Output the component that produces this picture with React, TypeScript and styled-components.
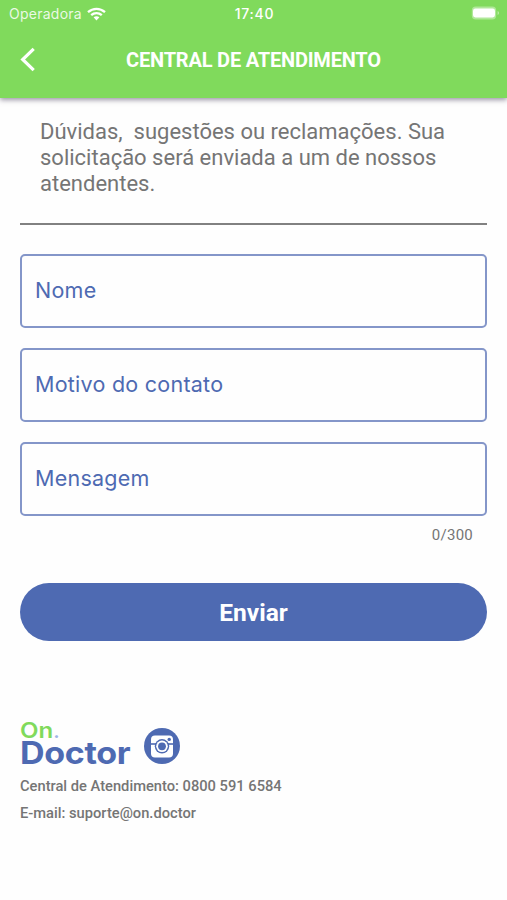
import React from "react";
import styled, { createGlobalStyle, ThemeProvider } from "styled-components";

const theme = {
  green: "#80da5c",
  blue: "#4e6ab2",
  border: "#8496c9",
  gray: "#757575",
  white: "#ffffff",
};

const GlobalStyle = createGlobalStyle`
  * {
    box-sizing: border-box;
  }

  body {
    margin: 0;
    background: #fefefe;
    font-family: Roboto, "Liberation Sans", sans-serif;
  }
`;

const StyledPage = styled.div`
  display: flex;
  flex-direction: column;
  min-height: 900px;
`;

const StyledHeader = styled.header`
  height: 98px;
  background: ${({ theme }) => theme.green};
  color: ${({ theme }) => theme.white};
  box-shadow: 0 2px 5px rgba(60, 50, 80, 0.5);
`;

const StyledStatusBar = styled.div`
  display: grid;
  grid-template-columns: 1fr auto 1fr;
  align-items: center;
  height: 27px;
  padding: 0 7px 0 9px;
  font-family: Inter, "Liberation Sans", sans-serif;
  font-size: 14px;
`;

const StyledCarrier = styled.div`
  display: flex;
  align-items: center;
  gap: 5px;
  letter-spacing: 0.25px;
  color: rgba(255, 255, 255, 0.85);
`;

const StyledClock = styled.div`
  font-weight: 500;
  letter-spacing: 0.7px;
`;

const StyledBattery = styled.svg`
  justify-self: end;
`;

const StyledToolbar = styled.div`
  display: grid;
  grid-template-columns: 40px 1fr 40px;
  align-items: center;
  height: 66px;
`;

const StyledBackButton = styled.button`
  display: flex;
  padding: 0 0 0 20px;
  border: 0;
  background: none;
  color: inherit;
`;

const StyledTitle = styled.h1`
  margin: 0;
  font-size: 20px;
  font-weight: 700;
  letter-spacing: -0.2px;
  text-align: center;
`;

const StyledContent = styled.main`
  display: flex;
  flex-direction: column;
  padding: 21px 20px 0;
`;

const StyledIntro = styled.p`
  margin: 0;
  padding: 0 20px 26px;
  border-bottom: 2px solid #818181;
  font-size: 22px;
  line-height: 26px;
  white-space: pre-line;
  color: ${({ theme }) => theme.gray};
`;

const StyledForm = styled.div`
  display: flex;
  flex-direction: column;
  gap: 20px;
  padding-top: 29px;
`;

const StyledField = styled.label`
  display: flex;
  align-items: center;
  height: 74px;
  padding: 0 13px 2px;
  border: 2px solid ${({ theme }) => theme.border};
  border-radius: 5px;
  font-family: Inter, "Liberation Sans", sans-serif;
  font-size: 21.5px;
  letter-spacing: 0.25px;
  color: ${({ theme }) => theme.blue};
`;

const StyledInput = styled.input`
  flex: 1;
  min-width: 0;
  border: 0;
  outline: 0;
  background: none;
  font: inherit;
  color: inherit;
`;

const StyledCounter = styled.div`
  padding: 10px 14px 0 0;
  font-size: 15px;
  line-height: 18px;
  letter-spacing: 0.25px;
  text-align: right;
  color: ${({ theme }) => theme.gray};
`;

const StyledSubmit = styled.button`
  height: 58px;
  margin-top: 39px;
  padding: 0;
  border: 0;
  border-radius: 29px;
  background: ${({ theme }) => theme.blue};
  font-family: inherit;
  font-size: 24.5px;
  font-weight: 700;
  color: ${({ theme }) => theme.white};
`;

const StyledFooter = styled.footer`
  padding-top: 81px;
  font-size: 14.7px;
  font-weight: 500;
  color: ${({ theme }) => theme.gray};
`;

const StyledBrand = styled.div`
  display: flex;
  align-items: flex-end;
  gap: 13px;
  height: 43px;
  margin-bottom: 8px;
`;

const StyledLogo = styled.div`
  display: flex;
  flex-direction: column;
  width: 111px;
  font-family: Inter, "Liberation Sans", sans-serif;
`;

const StyledLogoTop = styled.div`
  font-size: 21.5px;
  font-weight: 600;
  line-height: 18px;
  color: ${({ theme }) => theme.green};
  transform: scaleX(1.12);
  transform-origin: left;
`;

const StyledLogoDot = styled.span`
  font-size: 18px;
  color: #9fb4e8;
`;

const StyledLogoBottom = styled.div`
  font-size: 31.5px;
  font-weight: 700;
  line-height: 24px;
  letter-spacing: -0.3px;
  color: ${({ theme }) => theme.blue};
  transform: scaleX(1.08);
  transform-origin: left;
`;

const StyledContact = styled.p`
  margin: 0;
  line-height: 27px;
`;

const fields = ["Nome", "Motivo do contato", "Mensagem"];

const WifiIcon = () => (
  <svg width="19" height="14" viewBox="0 0 19 14" fill="none">
    <path
      d="M1 5.2C6 .7 13 .7 18 5.2M4.2 8.2c3-2.8 7.6-2.8 10.6 0"
      stroke="#fff"
      strokeWidth="2.3"
    />
    <path d="M6.6 10.3c1.7-1.4 4.1-1.4 5.8 0L9.5 13.4z" fill="#fff" />
  </svg>
);

const BatteryIcon = () => (
  <StyledBattery width="29" height="15" viewBox="0 0 29 15">
    <rect x="0.8" y="0.6" width="24.4" height="12.8" rx="4" fill="#fff" opacity="0.38" />
    <rect x="2" y="2.5" width="22" height="9" rx="2.4" fill="#fff" />
    <path d="M26.6 5c1.8.7 1.8 3.3 0 4z" fill="#fff" opacity="0.5" />
  </StyledBattery>
);

const BackIcon = () => (
  <svg width="16" height="26" viewBox="0 0 16 26" fill="none">
    <path d="M13.7 1.8 2.7 12.5l11 10.7" stroke="#fff" strokeWidth="3.2" />
  </svg>
);

const InstagramIcon = () => (
  <svg width="36" height="37" viewBox="0 0 36 37" fill="none">
    <circle cx="18" cy="18" r="18" fill={theme.blue} />
    <rect x="7" y="7.5" width="22" height="22" rx="4" fill="#fff" />
    <path d="M7 16h22" stroke={theme.blue} strokeWidth="1.6" />
    <circle cx="18" cy="18.3" r="7.2" fill={theme.blue} />
    <circle cx="18" cy="18.3" r="5.8" fill="#fff" />
    <circle cx="18" cy="18.3" r="3.9" fill={theme.blue} />
    <circle cx="25.2" cy="11.4" r="1.7" fill={theme.blue} />
  </svg>
);

const App: React.FC = () => {
  return (
    <ThemeProvider theme={theme}>
      <GlobalStyle />
      <StyledPage>
        <StyledHeader>
          <StyledStatusBar>
            <StyledCarrier>
              Operadora
              <WifiIcon />
            </StyledCarrier>
            <StyledClock>17:40</StyledClock>
            <BatteryIcon />
          </StyledStatusBar>
          <StyledToolbar>
            <StyledBackButton aria-label="Voltar">
              <BackIcon />
            </StyledBackButton>
            <StyledTitle>CENTRAL DE ATENDIMENTO</StyledTitle>
          </StyledToolbar>
        </StyledHeader>
        <StyledContent>
          <StyledIntro>
            {"Dúvidas, \u00a0sugestões ou reclamações. Sua\nsolicitação será enviada a um de nossos\natendentes."}
          </StyledIntro>
          <StyledForm>
            {fields.map((field) => (
              <StyledField key={field}>
                {field}
                <StyledInput />
              </StyledField>
            ))}
          </StyledForm>
          <StyledCounter>0/300</StyledCounter>
          <StyledSubmit>Enviar</StyledSubmit>
          <StyledFooter>
            <StyledBrand>
              <StyledLogo>
                <StyledLogoTop>
                  On<StyledLogoDot>.</StyledLogoDot>
                </StyledLogoTop>
                <StyledLogoBottom>Doctor</StyledLogoBottom>
              </StyledLogo>
              <InstagramIcon />
            </StyledBrand>
            <StyledContact>Central de Atendimento: 0800 591 6584</StyledContact>
            <StyledContact>E-mail: suporte@on.doctor</StyledContact>
          </StyledFooter>
        </StyledContent>
      </StyledPage>
    </ThemeProvider>
  );
};

export default App;
